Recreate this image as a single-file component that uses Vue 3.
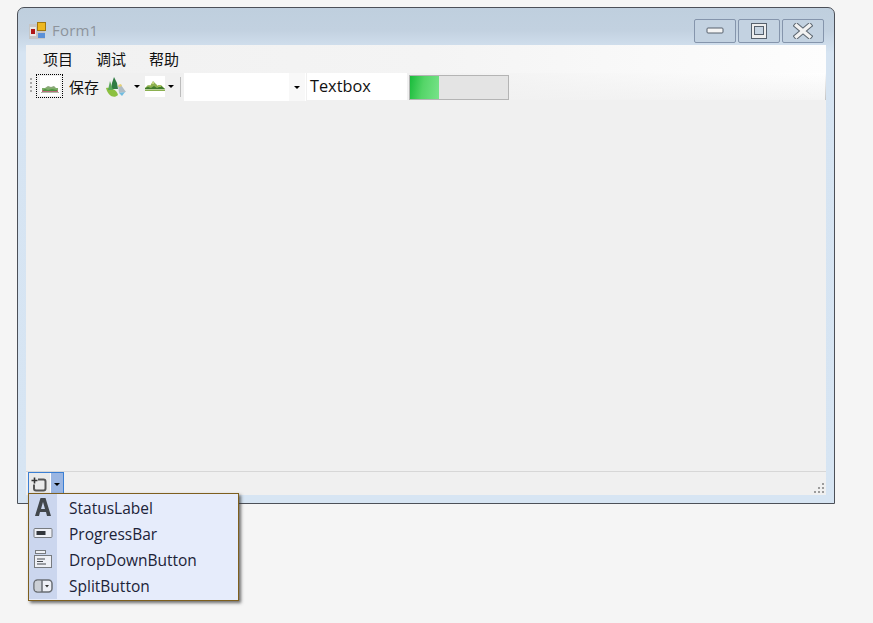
<template>
  <div class="page">
    <div class="window">
      <div class="titlebar">
        <svg class="appicon" width="18" height="18" viewBox="0 0 18 18">
          <rect x="0" y="3" width="16" height="15" fill="#c6c6c6"/>
          <rect x="1" y="6" width="6" height="9" fill="#e8e8e8"/>
          <rect x="2" y="8" width="4" height="5" fill="#b01818"/>
          <rect x="8.500" y="1.500" width="8" height="8" fill="#eeb820" stroke="#a07810"/>
          <rect x="9" y="12" width="7" height="5" fill="#5a90d8"/>
        </svg>
        <span class="title">Form1</span>
        <div class="caption">
          <div class="capbtn">
            <svg width="18" height="8" viewBox="0 0 18 8"><rect x="1" y="1" width="16" height="5" rx="1" fill="#f4f4f4" stroke="#56606c"/></svg>
          </div>
          <div class="capbtn">
            <svg width="18" height="16" viewBox="0 0 18 16"><rect x="1.500" y="0.500" width="15" height="15" fill="#eee" stroke="#56606c"/><rect x="4.500" y="3.500" width="9" height="8" fill="#c6d4e2" stroke="#56606c"/></svg>
          </div>
          <div class="capbtn">
            <svg width="20" height="16" viewBox="0 0 20 16" fill="none" stroke-linecap="square"><path d="M3.500 2.500l13 11M16.500 2.500l-13 11" stroke="#5c6670" stroke-width="5.500"/><path d="M3.500 2.500l13 11M16.500 2.500l-13 11" stroke="#f2f2f2" stroke-width="3.500"/></svg>
          </div>
        </div>
      </div>
      <div class="client">
        <div class="menubar">
          <span class="menuitem" v-for="m in menus" :key="m">{{ m }}</span>
        </div>
        <div class="toolbar">
          <div class="grip"><i></i><i></i><i></i><i></i></div>
          <div class="tool focused">
            <svg width="20" height="20" viewBox="0 0 20 20"><rect width="20" height="20" fill="#fff"/><path d="M5 12l3-2 3 1 3-1 2 2z" fill="#8aa878"/><path d="M2 12h16v2H2z" fill="#7fae6a"/><path d="M2 14h16v2H2z" fill="#b8707c"/><path d="M3 14l2-1 3 1 4-1 5 1v1H3z" fill="#4e9440"/><rect x="1" y="16" width="18" height="1" fill="#aeb8a4"/></svg>
          </div>
          <span class="savetext">保存</span>
          <svg class="leaf" width="20" height="22" viewBox="0 0 20 22"><path d="M0 12c5-1 11 2 12 7-4 4-10 1-12-7z" fill="#8cc040"/><path d="M8 1l3 6 1 6H5l1-6z" fill="#2f7c42"/><path d="M4 5l3 9H2z" fill="#5ca85a"/><path d="M12 10l3-1 5 7-7 1z" fill="#b0bcc4"/><path d="M13 17l6-1-3 4z" fill="#70bce0"/><path d="M12 9l3-1 1 2-3 1z" fill="#e8d070"/></svg>
          <i class="arrow a1"></i>
          <svg class="mount" width="20" height="21" viewBox="0 0 20 21"><rect width="20" height="21" fill="#fff"/><path d="M0 12l3-3 2 1 3-5 3 3 2 2 3-1 4 4v2H0z" fill="#8cb050"/><path d="M0 12l3-1 3 1 3-2 3 2 4-2 4 3v1H0z" fill="#3f7a2c"/><rect x="7" y="6" width="2" height="2" fill="#c4d47c"/><rect x="4" y="9" width="2" height="1" fill="#b4c868"/><rect x="13" y="9" width="3" height="2" fill="#a4c058"/><rect x="0" y="13" width="20" height="1" fill="#b8d09a"/></svg>
          <i class="arrow a2"></i>
          <div class="sep"></div>
          <div class="combo"><div class="combobtn"><i class="arrow"></i></div></div>
          <div class="textbox">Textbox</div>
          <div class="progress"><div class="fill"></div></div>
          <div class="endline"></div>
        </div>
        <div class="content"></div>
        <div class="statusbar">
          <div class="statusbtn">
            <div class="sbicon">
              <svg width="18" height="18" viewBox="0 0 18 18" fill="none" stroke="#555" stroke-width="2"><path d="M7 4.500h5.500a2 2 0 0 1 2 2v7a2 2 0 0 1-2 2H5a2 2 0 0 1-2-2V9.500"/><path d="M3.500 2.500v6M0.500 5.500h6" stroke-width="1.600" stroke="#333"/></svg>
            </div>
            <div class="sbdrop"><i class="arrow"></i></div>
          </div>
          <div class="resize"><i v-for="n in 6" :key="n" :class="'d' + n"></i></div>
        </div>
      </div>
    </div>
    <div class="popup">
      <div class="row" v-for="it in items" :key="it.label">
        <div class="gutter">
          <svg v-if="it.icon === 'a'" width="20" height="22" viewBox="0 0 20 22"><path d="M7.500 2h5L18 20h-4l-1-4H7l-1 4H2zM8 13h4l-2-7z" fill="#42474c" fill-rule="evenodd"/></svg>
          <svg v-if="it.icon === 'p'" width="20" height="12" viewBox="0 0 20 12"><rect x="1" y="1.500" width="18" height="9" rx="1" fill="#eef0f6" stroke="#777b80"/><rect x="3.500" y="4" width="9" height="4" fill="#33373c"/></svg>
          <svg v-if="it.icon === 'd'" width="20" height="20" viewBox="0 0 20 20" fill="none" stroke="#777b80"><rect x="2.500" y="1.500" width="10" height="3" fill="#eef0f6"/><rect x="1.500" y="6.500" width="17" height="12" fill="#eef0f6"/><path d="M4 10h8M4 12.500h6M4 15h9" stroke="#44484e"/></svg>
          <svg v-if="it.icon === 's'" width="20" height="16" viewBox="0 0 20 16"><rect x="1" y="2" width="18" height="12" rx="3.500" fill="#eef0f6" stroke="#6a6e74" stroke-width="1.500"/><rect x="1.800" y="2.800" width="7.200" height="10.400" rx="2.500" fill="#ccd0d6"/><path d="M9 2v12" stroke="#6a6e74" stroke-width="1.500"/><path d="M12 7h4l-2 2.500z" fill="#333"/></svg>
        </div>
        <span class="label">{{ it.label }}</span>
      </div>
    </div>
  </div>
</template>

<script setup>
const menus = ['项目', '调试', '帮助']
const items = [
  { label: 'StatusLabel', icon: 'a' },
  { label: 'ProgressBar', icon: 'p' },
  { label: 'DropDownButton', icon: 'd' },
  { label: 'SplitButton', icon: 's' }
]
</script>

<style>
html, body { margin: 0; background: #f5f5f5; }
</style>

<style scoped>
.page {
  position: relative;
  width: 873px;
  height: 623px;
  padding: 7px 0 0 17px;
  box-sizing: border-box;
  background: #f5f5f5;
  overflow: hidden;
  font-family: "Open Sans", "Noto Sans CJK SC", sans-serif;
  color: #111;
}
.window {
  width: 818px;
  height: 497px;
  box-sizing: border-box;
  border: 1px solid #4c5058;
  border-radius: 7px 7px 0 0;
  background: linear-gradient(#bfcfde 0, #c2d1e0 22px, #d6e4f2 45px, #d7e5f3 100%);
  padding: 0 8px 8px 8px;
  display: flex;
  flex-direction: column;
}
.titlebar {
  height: 37px;
  flex: none;
  display: flex;
  align-items: center;
  position: relative;
}
.appicon { margin: 6px 0 0 3px; flex: none; }
.title {
  margin: 6px 0 0 5px;
  font-size: 15px;
  color: #8d949c;
  letter-spacing: 0.2px;
}
.caption {
  margin-left: auto;
  margin-right: 2px;
  margin-top: 9px;
  display: flex;
  gap: 2px;
}
.capbtn {
  width: 40px;
  height: 22px;
  border: 1px solid #8595ac;
  border-radius: 2px;
  background: #c3d2e1;
  display: flex;
  align-items: center;
  justify-content: center;
}
.client {
  flex: 1;
  display: flex;
  flex-direction: column;
  background: #f0f0f0;
}
.menubar {
  height: 28px;
  flex: none;
  display: flex;
  align-items: center;
  padding-left: 17px;
  gap: 23px;
  font-size: 15px;
  background: linear-gradient(90deg, #f1f1f1 0, #f4f4f4 50%, #fdfdfd 100%);
}
.menuitem { width: 30px; line-height: 28px; }
.toolbar {
  height: 27px;
  flex: none;
  display: flex;
  align-items: flex-start;
  position: relative;
  background: linear-gradient(90deg, #f0f0f0 45%, rgba(240, 240, 240, 0) 100%), linear-gradient(#fefefe, #f4f4f4);
}
.grip {
  width: 3px;
  margin: 5px 0 0 4px;
  display: flex;
  flex-direction: column;
  gap: 2px;
}
.grip i { display: block; width: 2px; height: 2px; background: #a8a8a8; }
.tool {
  width: 27px;
  height: 24px;
  margin: 1px 0 0 3px;
  box-sizing: border-box;
  border: 1px dotted #000;
  display: flex;
  align-items: center;
  justify-content: center;
  flex: none;
}
.savetext { margin: 2px 0 0 6px; font-size: 15px; width: 31px; line-height: 24px; flex: none; }
.leaf { margin: 3px 0 0 6px; flex: none; }
.mount { margin: 3px 0 0 5px; flex: none; }
.arrow {
  display: block;
  width: 0;
  height: 0;
  border-left: 3px solid transparent;
  border-right: 3px solid transparent;
  border-top: 3px solid #000;
  flex: none;
}
.a1 { margin: 12px 0 0 8px; }
.a2 { margin: 12px 0 0 3px; }
.sep { width: 1px; height: 20px; background: #bcbcbc; margin: 4px 0 0 6px; flex: none; }
.combo {
  width: 122px;
  height: 28px;
  margin-left: 3px;
  background: #fff;
  display: flex;
  justify-content: flex-end;
  flex: none;
}
.combobtn {
  width: 16px;
  height: 100%;
  margin-right: 1px;
  background: #f8f8f8;
  display: flex;
  align-items: center;
  justify-content: center;
}
.textbox {
  width: 100px;
  height: 27px;
  margin-left: 1px;
  padding-left: 3px;
  box-sizing: border-box;
  background: #fff;
  font-size: 16.300px;
  line-height: 27px;
  flex: none;
}
.progress {
  width: 100px;
  height: 25px;
  margin: 2px 0 0 2px;
  box-sizing: border-box;
  border: 1px solid #b4b4b4;
  background: #e4e4e4;
  flex: none;
}
.fill {
  width: 29px;
  height: 100%;
  background: linear-gradient(100deg, #18bb3a 0, #55d568 45%, #78e38a 100%);
}
.endline {
  position: absolute;
  right: 0;
  top: 0;
  width: 1px;
  height: 27px;
  background: linear-gradient(#fdfdfd, #c4c4c4);
}
.content { flex: 1; background: #f0f0f0; }
.statusbar {
  height: 23px;
  flex: none;
  display: flex;
  align-items: flex-start;
  justify-content: space-between;
  border-top: 1px solid #d7d7d7;
  background: #f0f0f0;
  position: relative;
}
.statusbtn {
  margin-left: 2px;
  height: 23px;
  width: 36px;
  display: flex;
  box-sizing: border-box;
  border: 1px solid #3b7fd4;
  border-bottom: none;
}
.sbicon {
  width: 21px;
  background: #eaeaea;
  display: flex;
  align-items: center;
  justify-content: center;
}
.sbdrop {
  flex: 1;
  background: #9bb6e2;
  border-left: 1px solid #fff;
  display: flex;
  align-items: center;
  justify-content: center;
}
.resize {
  position: relative;
  width: 10px;
  height: 10px;
  margin: 11px 2px 0 0;
}
.resize i { position: absolute; width: 2px; height: 2px; background: #9c9c9c; }
.d1 { left: 8px; top: 0; }
.d2 { left: 4px; top: 4px; }
.d3 { left: 8px; top: 4px; }
.d4 { left: 0; top: 8px; }
.d5 { left: 4px; top: 8px; }
.d6 { left: 8px; top: 8px; }
.popup {
  position: absolute;
  left: 28px;
  top: 493px;
  width: 211px;
  box-sizing: border-box;
  border: 1px solid #7e5f1e;
  padding-bottom: 1px;
  background: #e6ecfb;
  box-shadow: 2px 2px 3px rgba(50, 50, 50, 0.7);
}
.row {
  height: 26px;
  display: flex;
  align-items: center;
}
.row:last-child { height: 27px; align-items: flex-start; }
.row:last-child .label { line-height: 26px; }
.gutter {
  width: 28px;
  height: 100%;
  background: #cbd6ee;
  display: flex;
  align-items: center;
  justify-content: center;
  flex: none;
}
.label {
  margin: 1px 0 0 12px;
  font-size: 15.500px;
  color: #1c2338;
}
</style>
